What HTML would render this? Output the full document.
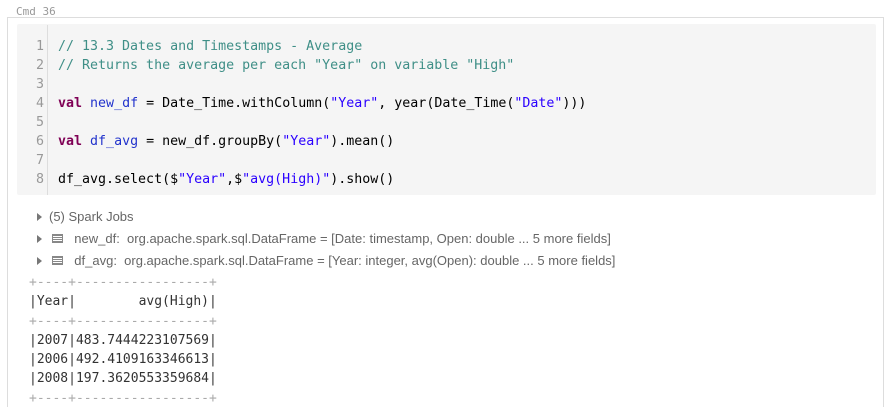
<!DOCTYPE html>
<html style="height:407px;overflow:hidden"><head><meta charset="utf-8"><style>
body{margin:0;width:892px;height:407px;background:#fff;overflow:hidden;position:relative;font-family:"Liberation Sans",sans-serif}
.cmd{position:absolute;left:16px;top:5px;font:11px "DejaVu Sans Mono",monospace;color:#999}
.cell{position:absolute;left:7px;top:17px;width:875px;height:390px;border:1px solid #ddd;border-bottom:none}
.code{position:absolute;left:17px;top:24px;width:859px;height:171px;background:#f5f5f5;border-radius:2px}
.gut{position:absolute;left:47px;top:25px;width:1px;height:170px;background:#ddd}
pre{margin:0;font-family:"DejaVu Sans Mono",monospace;font-size:13.3px;line-height:19px;position:absolute}
.ln{left:17px;top:37px;width:27px;text-align:right;color:#999}
.src{left:58px;top:37px;color:#000}
.c{color:#3f8f87}.k{color:#7f0055;font-weight:bold}.v{color:#2233cc}.s{color:#2a00ff}
.row{position:absolute;left:37px;font-size:13px;color:#666;white-space:pre}
.tri{display:inline-block;width:0;height:0;border-left:5px solid #777;border-top:4px solid transparent;border-bottom:4px solid transparent;margin-right:7px}
.ico{position:absolute;left:52px;width:11px;height:9px;border:1px solid #888;box-sizing:border-box;background:repeating-linear-gradient(#888 0 1px,#fff 1px 2px)}
.out{left:29px;top:273px;color:#333;font-size:13px;line-height:19.3px}
.dim{color:#aaa}
</style></head><body>
<div class="cmd">Cmd 36</div>
<div class="cell"></div>
<div class="code"></div>
<div class="gut"></div>
<pre class="ln">1
2
3
4
5
6
7
8</pre>
<pre class="src"><span class="c">// 13.3 Dates and Timestamps - Average</span>
<span class="c">// Returns the average per each "Year" on variable "High"</span>

<span class="k">val</span> <span class="v">new_df</span> = Date_Time.withColumn(<span class="s">"Year"</span>, year(Date_Time(<span class="s">"Date"</span>)))

<span class="k">val</span> <span class="v">df_avg</span> = new_df.groupBy(<span class="s">"Year"</span>).mean()

df_avg.select($<span class="s">"Year"</span>,$<span class="s">"avg(High)"</span>).show()</pre>
<div class="row" style="top:209px"><span class="tri"></span>(5) Spark Jobs</div>
<div class="row" style="top:231px"><span class="tri"></span>       new_df:  org.apache.spark.sql.DataFrame = [Date: timestamp, Open: double ... 5 more fields]</div>
<div class="ico" style="top:234px"></div>
<div class="row" style="top:253px"><span class="tri"></span>       df_avg:  org.apache.spark.sql.DataFrame = [Year: integer, avg(Open): double ... 5 more fields]</div>
<div class="ico" style="top:256px"></div>
<pre class="out"><span class="dim">+----+-----------------+</span>
|Year|        avg(High)|
<span class="dim">+----+-----------------+</span>
|2007|483.7444223107569|
|2006|492.4109163346613|
|2008|197.3620553359684|
<span class="dim">+----+-----------------+</span></pre>
</body></html>
